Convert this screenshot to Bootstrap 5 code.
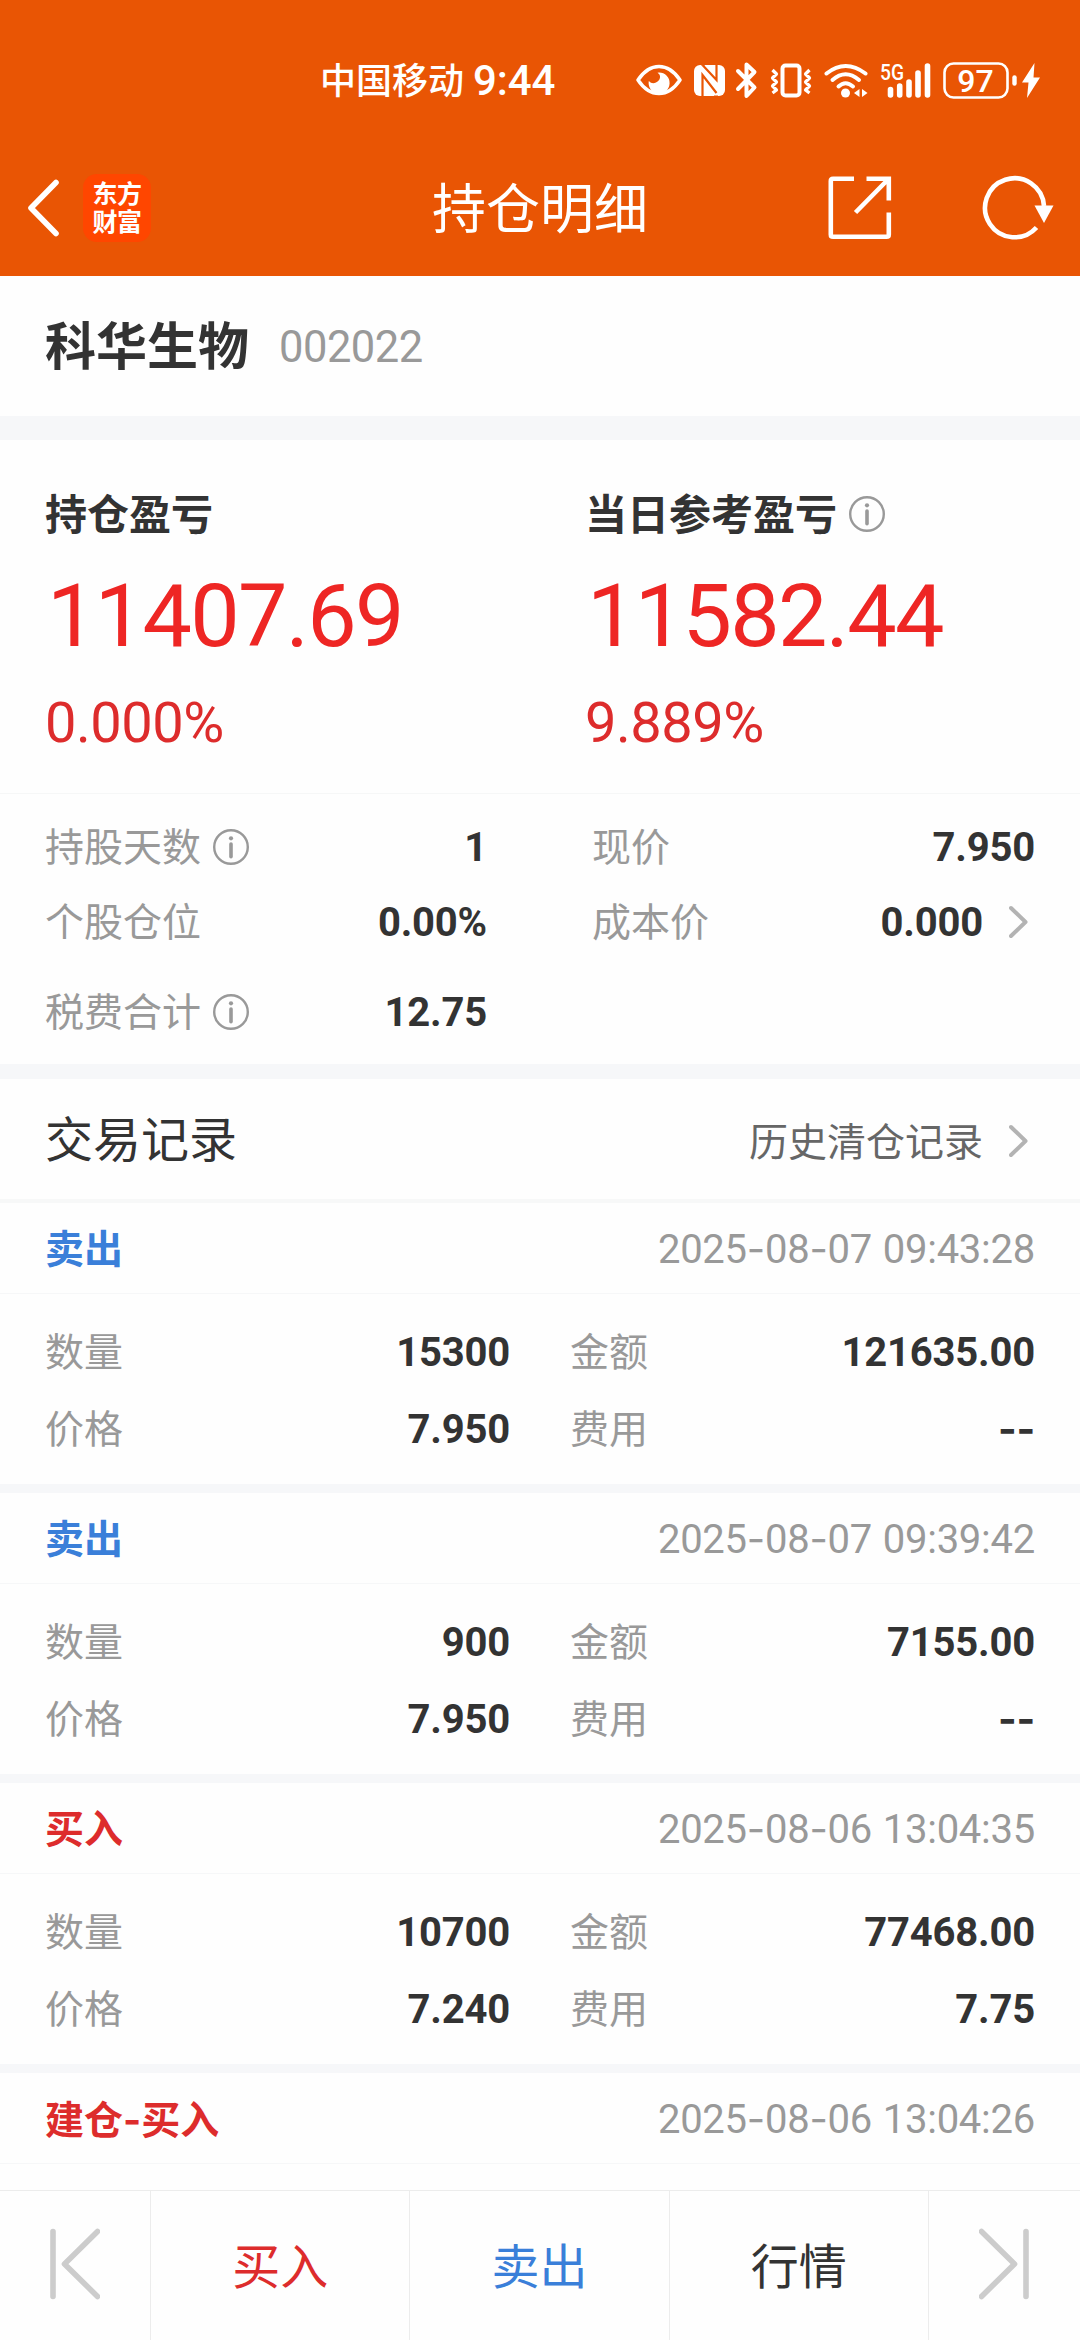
<!DOCTYPE html>
<html lang="zh-CN">
<head>
<meta charset="utf-8">
<meta name="viewport" content="width=device-width, initial-scale=1">
<title>持仓明细</title>
<link rel="stylesheet" href="https://cdn.jsdelivr.net/npm/bootstrap@5.3.0/dist/css/bootstrap.min.css">
<style>
  :root { --bar: #e95504; --ink: #333; --soft: #999; --up: #dd2c2c; --up-strong: #ee2624; --down: #3a7fd9; --band: #f6f7f9; }
  html, body { height: 2340px; overflow: hidden; }
  body { font-family: Roboto, "Noto Sans CJK SC", sans-serif; color: var(--ink); background: #fefefe; font-size: 39px; line-height: 1; }
  svg { display: block; flex: none; }
  .app-top { background: var(--bar); height: 276px; }
  .status { height: 160px; padding: 0 39px 0 320px; }
  .carrier { font-size: 36px; font-weight: 500; padding-top: 3px; }
  .clock { font-size: 42px; font-weight: 500; margin-left: 9px; width: 83px; letter-spacing: -.1px; padding-top: 2px; }
  .status-icons { margin-left: auto; }
  .icon-gap { margin-left: 12px; }
  .icon-gap-sm { margin-left: 4px; }
  .net-label { font-size: 22px; font-weight: 500; }
  .title-bar { height: 96px; padding: 0 28px; }
  .title-side { width: 240px; }
  .title-side.tools { padding-left: 16px; }
  .back { margin-left: -2px; }
  .reload { margin-right: -2px; }
  .page-title { font-size: 54px; padding-top: 6px; }
  .brand { width: 68px; height: 68px; border-radius: 14px; background: #ff4600; font-size: 25px; line-height: 28px; font-weight: 700; letter-spacing: -.5px; margin-left: 24px; padding-top: 2px; }
  .px { padding-left: 45px; padding-right: 45px; }
  .stock { height: 140px; padding-top: 3px; }
  .stock-name { font-size: 51px; font-weight: 700; }
  .stock-code { font-size: 43.5px; margin-left: 30px; letter-spacing: -.5px; color: var(--soft); }
  .band { background: var(--band); flex: none; }
  .band-lg { height: 24px; } .band-md { height: 15px; } .band-sm { height: 9px; } .band-line { height: 4px; background: #f7f8f8; }
  .profit { height: 354px; border-bottom: 1px solid #f6f7f7; padding-top: 44px; }
  .profit > div { width: 540px; padding-left: 45px; }
  .profit-label { font-size: 42px; font-weight: 700; height: 60px; gap: 12px; }
  .profit-label > span { padding-top: 3px; }
  .profit-sum { font-size: 88px; letter-spacing: -1.7px; padding-left: 2px; color: var(--up-strong); height: 142px; line-height: 144px; }
  .profit-rate { font-size: 56px; letter-spacing: -.5px; color: var(--up); height: 74px; line-height: 74px; }
  .facts { height: 270px; padding-top: 15px; }
  .line { height: 75px; }
  .line-gap { margin-top: 15px; }
  .facts .col-a { width: 442px; }
  .facts .col-b { width: 443px; margin-left: 105px; }
  .tag { color: var(--soft); gap: 12px; padding-top: 4px; }
  .tag svg { margin-bottom: 4px; }
  .num { font-size: 40px; font-weight: 700; letter-spacing: -.2px; padding-top: 3px; }
  .num.dash { padding-top: 0; }
  .go { margin: 0 7px 0 26px; }
  .log-head { height: 120px; }
  .log-title { font-size: 48px; padding-top: 3px; }
  .log-more { color: #666; padding-top: 4px; }
  .log-more > span { padding-top: 4px; }
  .rec-head { height: 91px; border-bottom: 1px solid #f6f7f8; }
  .rec-body { height: 190px; padding-top: 19px; }
  .rec-body .line { height: 77px; }
  .col-q { width: 465px; }
  .col-m { width: 465px; margin-left: 60px; }
  .side { font-weight: 700; padding-top: 4px; }
  .buy { color: var(--up); } .sell { color: var(--down); }
  .when { font-size: 40px; letter-spacing: -.25px; word-spacing: 1px; color: var(--soft); padding-top: 3px; }
  .dash { font-family: Inter, sans-serif; }
  .dock { height: 150px; border-top: 1px solid #ececec; background: #fefefe; font-size: 48px; }
  .dock > a { color: inherit; border-right: 1px solid #ececec; padding-top: 4px; }
  .dock > a:last-child { border-right: 0; }
  .dock .end { width: 151px; flex: none; padding: 0 0 3px; }
  .dock .buy { color: var(--up); } .dock .sell { color: var(--down); }
</style>
</head>
<body class="d-flex flex-column">
<svg width="0" height="0" class="position-absolute" aria-hidden="true">
  <symbol id="info" viewBox="0 0 36 36"><circle cx="18" cy="18" r="16.8" fill="none" stroke="#999" stroke-width="2.4"/><circle cx="18" cy="9.3" r="2.1" fill="#999"/><path d="M18 15v12.7" stroke="#999" stroke-width="3.6" stroke-linecap="round"/></symbol>
  <symbol id="next" viewBox="0 0 19 34"><path d="M2 3l14.500 14L2 31" fill="none" stroke="#b3b3b3" stroke-width="4" stroke-linecap="round" stroke-linejoin="round"/></symbol>
</svg>

<header class="app-top text-white flex-shrink-0">
  <div class="status d-flex align-items-center">
    <span class="carrier">中国移动</span><span class="clock">9:44</span>
    <div class="status-icons d-flex align-items-center">
      <svg width="46" height="40" viewBox="0 0 46 40"><path d="M2 20Q11 6.500 23 6.500T44 20Q35 33.500 23 33.500T2 20z" fill="none" stroke="#fff" stroke-width="3.500" stroke-linejoin="round"/><path d="M23 12.500A10.500 10.500 0 1 1 12.800 21Q16 24.500 20 22.500Q24.500 20 24 16Q23.800 14 21.500 12.700z" fill="#fff"/></svg>
      <svg class="ms-2" width="36" height="40" viewBox="-4 0 36 40"><rect x="0" y="5" width="31" height="31" rx="6" fill="#fff"/><path d="M8.500 5L22.500 20V5M8.500 36V15L22.500 33" fill="none" stroke="#e95504" stroke-width="2.200"/><path d="M7 4.500h4M20 36.500h4" stroke="#e95504" stroke-width="2"/></svg>
      <svg width="24" height="40" viewBox="0 0 24 40" class="ms-2 me-2"><path d="M4 11L20.500 27.500 12.500 36V4.500L20.500 12 4 29" fill="none" stroke="#fff" stroke-width="4" stroke-linecap="round" stroke-linejoin="round"/></svg>
      <svg class="ms-1" width="42" height="40" viewBox="0 0 42 40"><rect x="12.500" y="5.500" width="17" height="30" rx="3" fill="none" stroke="#fff" stroke-width="4"/><path d="M2.500 10l4 4-4 4 4 4-4 4 4 4-4 3M39.500 10l-4 4 4 4-4 4 4 4-4 4 4 3" fill="none" stroke="#fff" stroke-width="3.200" stroke-linejoin="round"/></svg>
      <svg class="icon-gap" width="44" height="40" viewBox="0 0 44 40"><g fill="none" stroke="#fff" stroke-width="4" stroke-linecap="round"><path d="M2.500 13.500Q21.500-1.500 41.500 13.500"/><path d="M8.500 20Q21.500 8.500 35 20"/><path d="M14.500 26.500Q21.500 20 29 26.500"/></g><circle cx="21.500" cy="33" r="4.500" fill="#fff"/><path d="M35.500 29v8l-5.500-4zM38 29v8l5.500-4z" fill="#fff"/></svg>
      <svg class="icon-gap" width="51" height="40" viewBox="0 0 51 40"><text class="net-label" x="0" y="20" fill="#fff" textLength="24" lengthAdjust="spacingAndGlyphs">5G</text><path d="M10.500 29.500V35M19.700 26V35M29 22V35M38 13V35M47.500 6V35" stroke="#fff" stroke-width="5.600" stroke-linecap="round"/></svg>
      <svg class="icon-gap" width="74" height="40" viewBox="0 0 74 40"><rect x="1.500" y="3.500" width="63" height="34" rx="9" fill="none" stroke="#fff" stroke-width="2.600"/><path d="M71.500 17.500v6" stroke="#fff" stroke-width="4.400" stroke-linecap="round"/><text x="32.500" y="32" text-anchor="middle" font-size="32" font-weight="500" fill="#fff">97</text></svg>
      <svg class="icon-gap-sm" width="20" height="40" viewBox="0 0 20 40"><path d="M13.500 3L1 22.500h6.500L6 38 19 17.500h-6.500z" fill="#fff"/></svg>
    </div>
  </div>
  <div class="title-bar d-flex align-items-center justify-content-between">
    <div class="title-side d-flex align-items-center">
      <svg class="back" width="33" height="60" viewBox="0 0 33 60"><path d="M30 4.500L5 30 30 55.500" fill="none" stroke="#fff" stroke-width="5.600" stroke-linecap="round" stroke-linejoin="round"/></svg>
      <div class="brand d-flex flex-column align-items-center justify-content-center"><span>东方</span><span>财富</span></div>
    </div>
    <h1 class="page-title fw-normal m-0">持仓明细</h1>
    <div class="title-side tools d-flex align-items-center justify-content-between">
      <svg width="64" height="64" viewBox="0 0 64 64" fill="none" stroke="#fff" stroke-width="4.600"><path d="M26 2.800H5Q2.800 2.800 2.800 5V58.500Q2.800 60.800 5 60.800H58.500Q60.800 60.800 60.800 58.500V36.500M38.500 2.800H60.800V24.500M60 3.500L27.500 36.500"/></svg>
      <svg class="reload" width="72" height="66" viewBox="0 0 72 66"><path d="M54.500 52.500A29.500 29.500 0 1 1 62 31" fill="none" stroke="#fff" stroke-width="4.600"/><path d="M52.500 30.500h19L62 48z" fill="#fff"/></svg>
    </div>
  </div>
</header>

<main class="flex-grow-1 overflow-hidden d-flex flex-column">
  <section class="stock px d-flex align-items-center flex-shrink-0"><span class="stock-name">科华生物</span><span class="stock-code">002022</span></section>
  <div class="band band-lg"></div>
  <section class="profit d-flex flex-shrink-0">
    <div>
      <div class="profit-label d-flex align-items-center"><span>持仓盈亏</span></div>
      <div class="profit-sum">11407.69</div>
      <div class="profit-rate">0.000%</div>
    </div>
    <div>
      <div class="profit-label d-flex align-items-center"><span>当日参考盈亏</span><svg width="36" height="36"><use href="#info"/></svg></div>
      <div class="profit-sum">11582.44</div>
      <div class="profit-rate">9.889%</div>
    </div>
  </section>
  <section class="facts px d-flex flex-shrink-0">
    <div class="col-a">
      <div class="line d-flex align-items-center justify-content-between"><span class="tag d-flex align-items-center">持股天数<svg width="36" height="36"><use href="#info"/></svg></span><span class="num">1</span></div>
      <div class="line d-flex align-items-center justify-content-between"><span class="tag">个股仓位</span><span class="num">0.00%</span></div>
      <div class="line line-gap d-flex align-items-center justify-content-between"><span class="tag d-flex align-items-center">税费合计<svg width="36" height="36"><use href="#info"/></svg></span><span class="num">12.75</span></div>
    </div>
    <div class="col-b">
      <div class="line d-flex align-items-center justify-content-between"><span class="tag">现价</span><span class="num">7.950</span></div>
      <div class="line d-flex align-items-center"><span class="tag">成本价</span><span class="num ms-auto">0.000</span><svg class="go" width="19" height="34"><use href="#next"/></svg></div>
    </div>
  </section>
  <div class="band band-md"></div>
  <section class="log-head px d-flex align-items-center justify-content-between flex-shrink-0">
    <h2 class="log-title fw-normal m-0">交易记录</h2>
    <a class="log-more d-flex align-items-center text-decoration-none"><span>历史清仓记录</span><svg class="go" width="19" height="34"><use href="#next"/></svg></a>
  </section>
  <div class="band band-line"></div>

  <article class="flex-shrink-0">
    <div class="rec-head px d-flex align-items-center justify-content-between"><span class="side sell">卖出</span><time class="when">2025<span class="dash">-</span>08<span class="dash">-</span>07 09:43:28</time></div>
    <div class="rec-body px d-flex">
      <div class="col-q">
        <div class="line d-flex align-items-center justify-content-between"><span class="tag">数量</span><span class="num">15300</span></div>
        <div class="line d-flex align-items-center justify-content-between"><span class="tag">价格</span><span class="num">7.950</span></div>
      </div>
      <div class="col-m">
        <div class="line d-flex align-items-center justify-content-between"><span class="tag">金额</span><span class="num">121635.00</span></div>
        <div class="line d-flex align-items-center justify-content-between"><span class="tag">费用</span><span class="num dash">--</span></div>
      </div>
    </div>
    <div class="band band-sm"></div>
  </article>
  <article class="flex-shrink-0">
    <div class="rec-head px d-flex align-items-center justify-content-between"><span class="side sell">卖出</span><time class="when">2025<span class="dash">-</span>08<span class="dash">-</span>07 09:39:42</time></div>
    <div class="rec-body px d-flex">
      <div class="col-q">
        <div class="line d-flex align-items-center justify-content-between"><span class="tag">数量</span><span class="num">900</span></div>
        <div class="line d-flex align-items-center justify-content-between"><span class="tag">价格</span><span class="num">7.950</span></div>
      </div>
      <div class="col-m">
        <div class="line d-flex align-items-center justify-content-between"><span class="tag">金额</span><span class="num">7155.00</span></div>
        <div class="line d-flex align-items-center justify-content-between"><span class="tag">费用</span><span class="num dash">--</span></div>
      </div>
    </div>
    <div class="band band-sm"></div>
  </article>
  <article class="flex-shrink-0">
    <div class="rec-head px d-flex align-items-center justify-content-between"><span class="side buy">买入</span><time class="when">2025<span class="dash">-</span>08<span class="dash">-</span>06 13:04:35</time></div>
    <div class="rec-body px d-flex">
      <div class="col-q">
        <div class="line d-flex align-items-center justify-content-between"><span class="tag">数量</span><span class="num">10700</span></div>
        <div class="line d-flex align-items-center justify-content-between"><span class="tag">价格</span><span class="num">7.240</span></div>
      </div>
      <div class="col-m">
        <div class="line d-flex align-items-center justify-content-between"><span class="tag">金额</span><span class="num">77468.00</span></div>
        <div class="line d-flex align-items-center justify-content-between"><span class="tag">费用</span><span class="num">7.75</span></div>
      </div>
    </div>
    <div class="band band-sm"></div>
  </article>
  <article class="flex-shrink-0">
    <div class="rec-head px d-flex align-items-center justify-content-between"><span class="side buy">建仓<span class="dash">-</span>买入</span><time class="when">2025<span class="dash">-</span>08<span class="dash">-</span>06 13:04:26</time></div>
  </article>
</main>

<nav class="dock d-flex flex-shrink-0">
  <a class="end d-flex align-items-center justify-content-center"><svg width="50" height="72" viewBox="0 0 50 72" fill="none" stroke="#ccc" stroke-width="5.600" stroke-linecap="round" stroke-linejoin="round"><path d="M3 3.500V68.500M47.500 3.500L14.500 36 47.500 68.500"/></svg></a>
  <a class="buy flex-fill d-flex align-items-center justify-content-center text-decoration-none">买入</a>
  <a class="sell flex-fill d-flex align-items-center justify-content-center text-decoration-none">卖出</a>
  <a class="flex-fill d-flex align-items-center justify-content-center text-decoration-none">行情</a>
  <a class="end d-flex align-items-center justify-content-center"><svg width="50" height="72" viewBox="0 0 50 72" fill="none" stroke="#ccc" stroke-width="5.600" stroke-linecap="round" stroke-linejoin="round"><path d="M47 3.500V68.500M2.500 3.500L35.500 36 2.500 68.500"/></svg></a>
</nav>
<script src="https://cdn.jsdelivr.net/npm/bootstrap@5.3.0/dist/js/bootstrap.bundle.min.js"></script>
</body>
</html>
